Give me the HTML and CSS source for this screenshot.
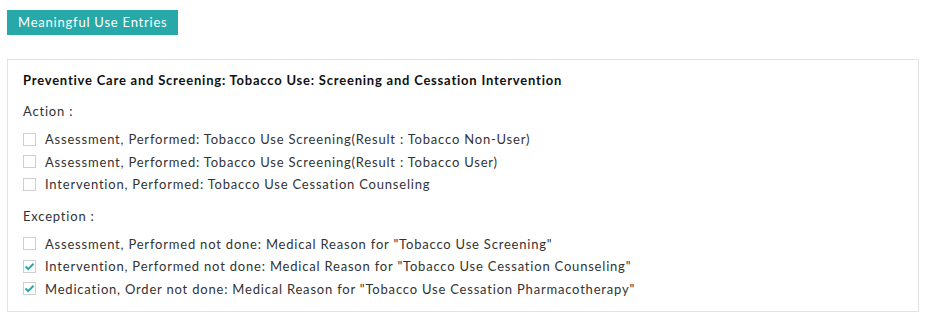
FILE: index.html
```html
<!DOCTYPE html>
<html>
<head>
<meta charset="utf-8">
<link rel="stylesheet" href="styles.css">
</head>
<body>
<div class="page">
  <button class="btn-entries">Meaningful Use Entries</button>
  <div class="panel">
    <h3 class="panel-title">Preventive Care and Screening: Tobacco Use: Screening and Cessation Intervention</h3>
    <div class="group-label">Action :</div>
    <ul class="check-list">
      <li class="check-item"><span class="box"></span><span>Assessment, Performed: Tobacco Use Screening(Result : Tobacco Non-User)</span></li>
      <li class="check-item"><span class="box"></span><span>Assessment, Performed: Tobacco Use Screening(Result : Tobacco User)</span></li>
      <li class="check-item"><span class="box"></span><span>Intervention, Performed: Tobacco Use Cessation Counseling</span></li>
    </ul>
    <div class="group-label">Exception :</div>
    <ul class="check-list">
      <li class="check-item"><span class="box"></span><span>Assessment, Performed not done: Medical Reason for "Tobacco Use Screening"</span></li>
      <li class="check-item"><span class="box checked"><svg viewBox="0 0 13 13" width="13" height="13"><path d="M2.5 6.5 L5.2 9.2 L10.5 3.8" fill="none" stroke="#26a9a8" stroke-width="2"/></svg></span><span>Intervention, Performed not done: Medical Reason for "Tobacco Use Cessation Counseling"</span></li>
      <li class="check-item"><span class="box checked"><svg viewBox="0 0 13 13" width="13" height="13"><path d="M2.5 6.5 L5.2 9.2 L10.5 3.8" fill="none" stroke="#26a9a8" stroke-width="2"/></svg></span><span>Medication, Order not done: Medical Reason for "Tobacco Use Cessation Pharmacotherapy"</span></li>
    </ul>
  </div>
</div>
</body>
</html>
```

FILE: styles.css
```css
* { box-sizing: border-box; }
body {
  margin: 0;
  background: #fff;
  font-family: Lato, "Open Sans", sans-serif;
  font-size: 13px;
  letter-spacing: 0.8px;
  color: #333;
}
.page {
  padding: 10px 12px 0 7px;
}
.btn-entries {
  display: block;
  height: 25px;
  padding: 0 10px 0 11px;
  border: none;
  background: #26a9a8;
  color: #fff;
  font-family: Lato, sans-serif;
  font-size: 13px;
  letter-spacing: 0.78px;
  line-height: 25px;
  margin: 0 0 24px 0;
}
.panel {
  border: 1px solid #e2e2e2;
  padding: 12px 15px 8px 15px;
  height: 253px;
}
.panel-title {
  margin: 0 0 15px 0;
  font-size: 13px;
  font-weight: bold;
  letter-spacing: 0.78px;
  color: #111;
  line-height: 16px;
}
.group-label {
  line-height: 16px;
  margin-bottom: 9px;
}
.check-list {
  list-style: none;
  margin: 0 0 12px 0;
  padding: 0;
}
.check-item {
  display: flex;
  align-items: center;
  height: 22.5px;
}
.box {
  width: 13px;
  height: 13px;
  border: 1px solid #cfcfcf;
  margin-right: 9px;
  flex: none;
  position: relative;
}
.box svg {
  position: absolute;
  left: -1px;
  top: -1px;
}
```
